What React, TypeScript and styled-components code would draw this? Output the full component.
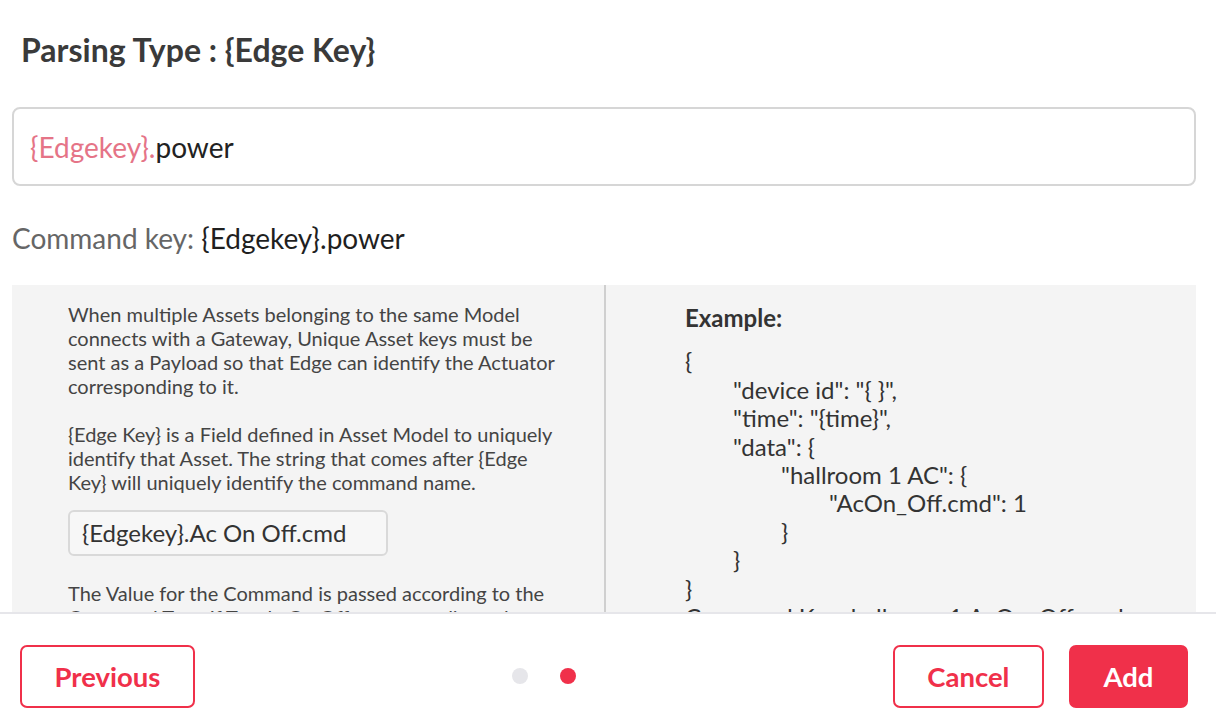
import React from 'react'
import styled, { createGlobalStyle } from 'styled-components'

const GlobalStyle = createGlobalStyle`
  html, body {
    margin: 0;
    padding: 0;
    background: #ffffff;
    font-family: Lato, "Open Sans", sans-serif;
  }
  * {
    box-sizing: border-box;
  }
`

const red = '#f0304a'

const Page = styled.div`
  height: 100vh;
  display: flex;
  flex-direction: column;
  background: #fff;
`

const Body = styled.div`
  flex: 1;
  min-height: 0;
  overflow: hidden;
  padding: 0 20px 0 12px;
  display: flex;
  flex-direction: column;
`

const Title = styled.h2`
  margin: 0;
  padding: 30px 0 0 9px;
  font-size: 32px;
  line-height: 40px;
  font-weight: 700;
  color: #3a3a3a;
`

const KeyInput = styled.div`
  margin-top: 37px;
  height: 79px;
  flex-shrink: 0;
  border: 2px solid #d6d6d6;
  border-radius: 8px;
  padding: 0 16px;
  display: flex;
  align-items: center;
  font-size: 28px;
  color: #222;
`

const Prefix = styled.span`
  color: #e57487;
`

const CommandKey = styled.div`
  margin-top: 36px;
  font-size: 28px;
  line-height: 32px;
  color: #666;

  b {
    font-weight: 400;
    color: #1f1f1f;
  }
`

const Panel = styled.div`
  margin-top: 31px;
  flex-shrink: 0;
  display: grid;
  grid-template-columns: 1fr 1fr;
  background: #f4f4f4;
  min-height: 420px;
`

const LeftCol = styled.div`
  padding: 17px 34px 0 56px;
  font-size: 20px;
  line-height: 24px;
  color: #444;
`

const RightCol = styled.div`
  border-left: 2px solid #cfcfcf;
  padding: 19px 30px 0 79px;
  font-size: 24px;
  line-height: 28.4px;
  color: #333;
`

const Para = styled.p`
  margin: 0 0 24px;
`

const CodeBox = styled.div`
  width: 320px;
  height: 46px;
  margin: -8px 0 25px;
  border: 2px solid #d9d9d9;
  border-radius: 6px;
  background: #f7f7f7;
  padding: 0 12px;
  display: flex;
  align-items: center;
  font-size: 24px;
  color: #333;
`

const ExampleLabel = styled.div`
  font-weight: 700;
  margin-bottom: 15px;
`

const CodeLine = styled.div<{ $level: number }>`
  padding-left: ${(p) => p.$level * 48}px;
  white-space: pre;
`

const Footer = styled.footer`
  flex-shrink: 0;
  height: 114px;
  border-top: 2px solid #e6e6ea;
  padding: 12px 28px 0 20px;
  display: flex;
  align-items: center;
  justify-content: space-between;
`

const Button = styled.button<{ $filled?: boolean }>`
  height: 63px;
  padding: 0 32.5px;
  border: 2px solid ${red};
  border-radius: 7px;
  background: ${(p) => (p.$filled ? red : '#fff')};
  color: ${(p) => (p.$filled ? '#fff' : red)};
  font-family: Lato, "Open Sans", sans-serif;
  font-size: 27.5px;
  font-weight: 700;
  cursor: pointer;
`

const Dots = styled.div`
  display: flex;
  gap: 32px;
`

const Dot = styled.span<{ $active?: boolean }>`
  width: 16px;
  height: 16px;
  border-radius: 50%;
  background: ${(p) => (p.$active ? red : '#e6e6ea')};
`

const Actions = styled.div`
  display: flex;
  gap: 25px;
`

const example: [number, string][] = [
  [0, '{'],
  [1, '"device id": "{ }",'],
  [1, '"time": "{time}",'],
  [1, '"data": {'],
  [2, '"hallroom 1 AC": {'],
  [3, '"AcOn_Off.cmd": 1'],
  [2, '}'],
  [1, '}'],
  [0, '}'],
  [0, 'Command Key: hallroom 1.AcOn_Off.cmd'],
]

export default function App() {
  return (
    <Page>
      <GlobalStyle />
      <Body>
        <Title>Parsing Type : {'{Edge Key}'}</Title>
        <KeyInput>
          <Prefix>{'{Edgekey}.'}</Prefix>power
        </KeyInput>
        <CommandKey>
          Command key: <b>{'{Edgekey}.power'}</b>
        </CommandKey>
        <Panel>
          <LeftCol>
            <Para>
              When multiple Assets belonging to the same Model connects with a Gateway, Unique Asset
              keys must be sent as a Payload so that Edge can identify the Actuator corresponding to
              it.
            </Para>
            <Para>
              {'{Edge Key}'} is a Field defined in Asset Model to uniquely identify that Asset. The
              string that comes after {'{Edge Key}'} will uniquely identify the command name.
            </Para>
            <CodeBox>{'{Edgekey}.Ac On Off.cmd'}</CodeBox>
            <Para>
              The Value for the Command is passed according to the Command Type If Toggle On Off
              corresponding values are passed.
            </Para>
          </LeftCol>
          <RightCol>
            <ExampleLabel>Example:</ExampleLabel>
            {example.map(([level, text], i) => (
              <CodeLine key={i} $level={level}>
                {text}
              </CodeLine>
            ))}
          </RightCol>
        </Panel>
      </Body>
      <Footer>
        <Button>Previous</Button>
        <Dots>
          <Dot />
          <Dot $active />
        </Dots>
        <Actions>
          <Button>Cancel</Button>
          <Button $filled>Add</Button>
        </Actions>
      </Footer>
    </Page>
  )
}
